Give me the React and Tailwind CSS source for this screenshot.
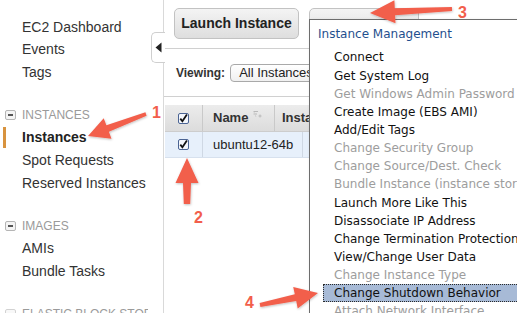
import React from 'react';

const sans = { fontFamily: '"Liberation Sans", Arial, sans-serif' };
const verdana = { fontFamily: '"DejaVu Sans", Verdana, sans-serif' };

// polygon for a tapered annotation arrow
const arrowPoints = (tx, ty, px, py, hl, hw, s1, s2) => {
  const dx = px - tx;
  const dy = py - ty;
  const len = Math.hypot(dx, dy);
  const ux = dx / len;
  const uy = dy / len;
  const nx = -uy;
  const ny = ux;
  const bx = px - ux * hl;
  const by = py - uy * hl;
  const pts = [
    [tx + nx * s2, ty + ny * s2],
    [bx + nx * s1, by + ny * s1],
    [bx + nx * hw, by + ny * hw],
    [px, py],
    [bx - nx * hw, by - ny * hw],
    [bx - nx * s1, by - ny * s1],
    [tx - nx * s2, ty - ny * s2],
  ];
  return pts.map((p) => p.map((v) => v.toFixed(1)).join(',')).join(' ');
};

const arrows = [
  { a: [146, 114, 88, 136, 21, 11, 3.5, 1.8], n: '1', x: 152, y: 118 },
  { a: [187, 204, 187, 158, 25, 11.5, 4, 3.2], n: '2', x: 194, y: 223 },
  { a: [452, 9, 370, 13, 25, 11.5, 3.5, 2], n: '3', x: 458, y: 18 },
  { a: [260, 305, 318, 293, 23, 11, 3.5, 2], n: '4', x: 245, y: 308 },
];

const CheckBox = () => (
  <svg width="11" height="11" viewBox="0 0 11 11">
    <rect x="0.5" y="0.5" width="10" height="10" rx="1.5" fill="#f4f7fc" stroke="#4b6494" />
    <path d="M2.3 5.6 L4.4 8.2 L8.9 1.6" fill="none" stroke="#111" strokeWidth="1.8" />
  </svg>
);

const MinusBox = ({ faded }) => (
  <span
    className={`w-[11px] h-[10px] border border-[#b5b5b5] rounded-[2px] bg-[#f4f4f4] flex items-center justify-center mr-[6px] ${faded ? 'opacity-60' : ''}`}
  >
    <span className="w-[5px] h-[2px] bg-[#555]" />
  </span>
);

const Section = ({ title, items, active, clip }) => (
  <div className="mt-[20px]">
    <div className="h-[22.67px] flex items-center pl-[5px]">
      <MinusBox faded={clip} />
      <span className={`text-[12px] text-[#9a9a9a] whitespace-nowrap ${clip ? 'w-[126px] overflow-hidden' : ''}`}>{title}</span>
    </div>
    {items.map((it) => (
      <div key={it} className="h-[22.67px] flex items-center relative pl-[22px]">
        {it === active && <span className="absolute left-[3px] top-[0px] w-[3px] h-[21px] bg-[#d8933f]" />}
        <span className={`text-[14px] whitespace-nowrap ${it === active ? 'font-bold text-[#222]' : 'text-[#333]'}`}>{it}</span>
      </div>
    ))}
  </div>
);

const menuItems = [
  ['Connect', true],
  ['Get System Log', true],
  ['Get Windows Admin Password', false],
  ['Create Image (EBS AMI)', true],
  ['Add/Edit Tags', true],
  ['Change Security Group', false],
  ['Change Source/Dest. Check', false],
  ['Bundle Instance (instance store)', false],
  ['Launch More Like This', true],
  ['Disassociate IP Address', true],
  ['Change Termination Protection', true],
  ['View/Change User Data', true],
  ['Change Instance Type', false],
  ['Change Shutdown Behavior', true, true],
  ['Attach Network Interface', false],
];

const App = () => {
  return (
    <div className="relative w-[517px] h-[313px] overflow-hidden bg-white flex" style={sans}>
      {/* sidebar */}
      <div className="w-[164px] shrink-0 border-r border-[#d9d9d9] pt-[16px] h-[313px]">
        {['EC2 Dashboard', 'Events', 'Tags'].map((it) => (
          <div key={it} className="h-[22.67px] flex items-center pl-[22px] text-[14px] text-[#333]">{it}</div>
        ))}
        <Section title="INSTANCES" items={['Instances', 'Spot Requests', 'Reserved Instances']} active="Instances" />
        <Section title="IMAGES" items={['AMIs', 'Bundle Tasks']} />
        <Section title="ELASTIC BLOCK STORE" items={[]} clip />
      </div>

      {/* main */}
      <div className="flex-1 flex flex-col">
        <div className="h-[49px] border-b border-[#d0d0d0] flex items-start pt-[8px] pl-[10px] gap-[10px]">
          <button className="h-[31px] w-[125px] rounded-[5px] border border-[#c2c2c2] bg-gradient-to-b from-[#f4f4f4] to-[#dedede] text-[14px] font-bold text-[#222]">
            Launch Instance
          </button>
          <button className="h-[31px] w-[110px] rounded-[5px] border border-[#c2c2c2] bg-gradient-to-b from-[#f4f4f4] to-[#dedede] pt-[5px] text-[14px] font-bold text-[#b5b5b5]">
            Actions
          </button>
        </div>
        <div className="h-[48px] border-b border-[#d0d0d0] flex items-center pl-[12px]">
          <span className="text-[12px] font-bold text-[#333]">Viewing:</span>
          <span className="ml-[5px] h-[18px] w-[120px] rounded-[4px] border border-[#a9a9a9] bg-gradient-to-b from-white to-[#f0f0f0] pl-[8px] text-[13px] leading-[16px] text-[#222] whitespace-nowrap">
            All Instances
          </span>
        </div>

        <div className="mt-[8px] ml-[1px]">
          <div className="h-[27px] flex bg-gradient-to-b from-[#ececec] to-[#dcdcdc] border-b border-[#cdcdcd]">
            <div className="w-[38px] flex items-center justify-center border-r border-[#c9c9c9]"><CheckBox /></div>
            <div className="w-[72px] flex items-center pl-[10px] border-r border-[#c9c9c9]">
              <span className="text-[13px] font-bold text-[#333]">Name</span>
              <svg className="ml-[5px] -mt-[6px]" width="9" height="8" viewBox="0 0 9 8">
                <path d="M0.5 0.5 H5 M0.5 3 H4 M5.5 5 H8.5 M7 3.5 V6.5" stroke="#b9b9b9" strokeWidth="1" fill="none" />
                <path d="M1 1 L3 6" stroke="#cfcfcf" strokeWidth="1" />
              </svg>
            </div>
            <div className="flex items-center pl-[7px] text-[13px] font-bold text-[#333]">Instance</div>
          </div>
          <div className="h-[26px] flex bg-[#e7f0fb] border-b border-[#d7e1ee]">
            <div className="w-[38px] flex items-center justify-center border-r border-[#cfd8e4]"><CheckBox /></div>
            <div className="w-[100px] flex items-center pl-[10px] border-r border-[#cfd8e4] text-[13px] text-[#222]">ubuntu12-64b</div>
          </div>
        </div>
      </div>

      {/* collapse tab */}
      <div className="absolute left-[151px] top-[32px] w-[14px] h-[31px] bg-white border border-r-0 border-[#cfcfcf] rounded-l-[5px] flex items-center justify-center">
        <svg width="7" height="11" viewBox="0 0 7 11">
          <path d="M6.5 0.5 L0.5 5.5 L6.5 10.5 Z" fill="#222" />
        </svg>
      </div>

      {/* actions menu */}
      <div className="absolute left-[309px] top-[19px] w-[230px] h-[320px] bg-white border-l border-t border-[#6d6d6d] shadow-[2px_2px_4px_rgba(0,0,0,0.2)]" style={verdana}>
        <div className="pt-[5px] pl-[8px] leading-[18px] text-[12px] text-[#1f4f8e]">Instance Management</div>
        <div className="mt-[5.4px]">
          {menuItems.map(([label, on, hl]) => (
            <div
              key={label}
              className={`h-[18.15px] ml-[13px] pl-[10px] border flex items-center whitespace-nowrap text-[12px] ${hl ? 'bg-[#a7bad6] border-dotted border-[#2a2a2a]' : 'border-transparent'} ${on ? 'text-[#111]' : 'text-[#9d9d9d]'}`}
            >
              {label}
            </div>
          ))}
        </div>
      </div>

      {/* annotations */}
      <svg className="absolute left-0 top-0 pointer-events-none" width="517" height="313" viewBox="0 0 517 313">
        <defs>
          <filter id="sh" x="-20%" y="-20%" width="140%" height="140%">
            <feDropShadow dx="0.5" dy="1" stdDeviation="0.8" floodColor="#000" floodOpacity="0.25" />
          </filter>
        </defs>
        {arrows.map(({ a, n, x, y }) => (
          <g key={n}>
            <polygon points={arrowPoints(...a)} fill="#f25e4c" filter="url(#sh)" />
            <text x={x} y={y} fontSize="16" fontWeight="bold" fill="#f25e4c" fontFamily="'Liberation Sans', Arial, sans-serif">{n}</text>
          </g>
        ))}
      </svg>
    </div>
  );
};

export default App;
